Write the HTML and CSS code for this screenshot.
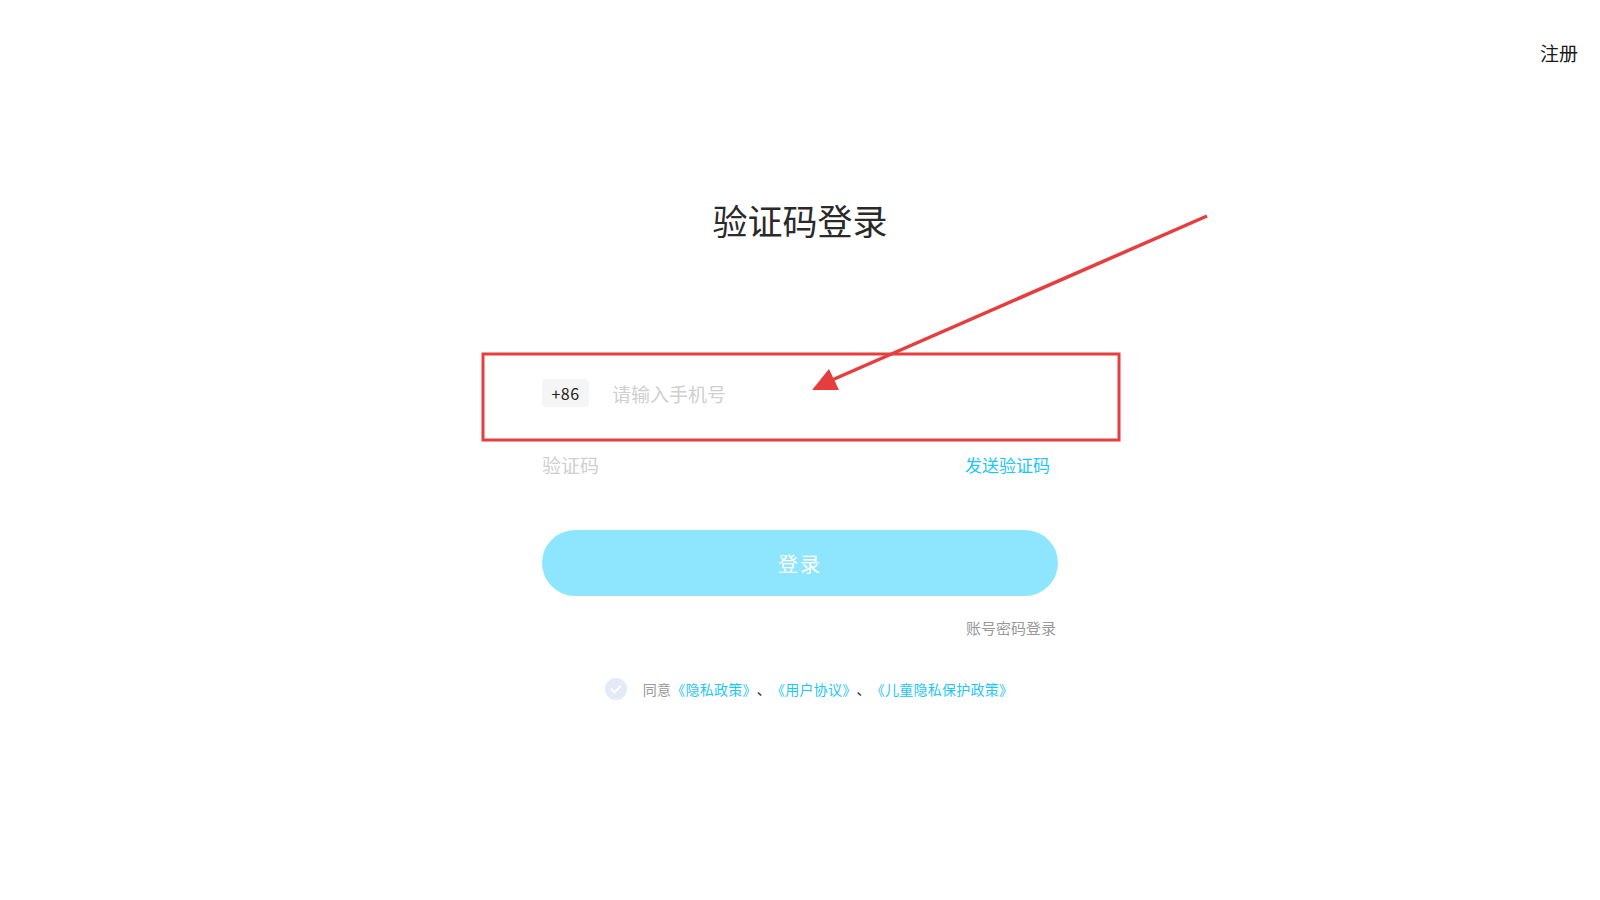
FILE: index.html
```html
<!DOCTYPE html>
<html lang="zh-CN">
  <head>
    <meta charset="UTF-8" />
    <meta name="viewport" content="width=device-width, initial-scale=1.0" />
    <title>验证码登录</title>
    <link rel="stylesheet" href="styles.css">
  </head>
  <body>
    <header class="topbar">
      <a class="register" href="#">注册</a>
    </header>

    <main class="login">
      <h1 class="title">验证码登录</h1>

      <div class="field phone">
        <span class="code">+86</span>
        <input class="input" type="text" placeholder="请输入手机号" />
      </div>

      <div class="field sms">
        <input class="input" type="text" placeholder="验证码" />
        <a class="send" href="#">发送验证码</a>
      </div>

      <button class="submit">登录</button>

      <div class="switch">
        <a href="#">账号密码登录</a>
      </div>

      <div class="agree">
        <span class="check">
          <svg width="22" height="22" viewBox="0 0 22 22">
            <circle cx="11" cy="11" r="11" fill="#e3e9f6" />
            <path d="M6.5 11.2 L9.6 14.2 L15.5 8.3" fill="none" stroke="#fff" stroke-width="2" stroke-linecap="round" stroke-linejoin="round" />
          </svg>
        </span>
        <span class="muted">同意</span><a href="#">《隐私政策》</a><span class="sep">、</span><a href="#">《用户协议》</a><span class="sep">、</span><a href="#">《儿童隐私保护政策》</a>
      </div>
    </main>

    <!-- annotation drawn over the page -->
    <svg class="markup" width="1600" height="900" viewBox="0 0 1600 900">
      <rect x="483" y="354" width="636" height="86" fill="none" stroke="#e63e3e" stroke-width="3" />
      <line x1="1207" y1="216" x2="832" y2="380" stroke="#e63e3e" stroke-width="3.5" />
      <polygon points="812,390 829,369 839,390" fill="#e63e3e" />
    </svg>
  </body>
</html>
```

FILE: styles.css
```css
* {
  box-sizing: border-box;
}

body {
  margin: 0;
  background-color: #fff;
  font-family: "Noto Sans CJK SC", "Noto Sans", sans-serif;
  color: #333;
}

a {
  text-decoration: none;
  color: #1ec6f2;
}

.topbar {
  display: flex;
  justify-content: flex-end;
  height: 66px;
  padding: 40px 22px 0;
}

.register {
  font-size: 19px;
  line-height: 26px;
  color: #1a1a1a;
}

.login {
  width: 516px;
  margin: 0 auto;
}

.title {
  margin: 130px 0 0;
  font-size: 35px;
  line-height: 48px;
  font-weight: 400;
  text-align: center;
  color: #2a2a2a;
}

.field {
  display: flex;
  align-items: center;
  height: 50px;
}

.phone {
  margin-top: 124px;
}

.sms {
  margin-top: 21px;
}

.code {
  width: 47px;
  height: 28px;
  margin-right: 23px;
  border-radius: 4px;
  background-color: #f5f5f5;
  font-size: 16px;
  line-height: 28px;
  text-align: center;
  color: #222;
  letter-spacing: 0.5px;
}

.input {
  flex: 1;
  border: none;
  outline: none;
  padding: 0;
  font-family: inherit;
  font-size: 19px;
  color: #333;
  background: transparent;
}

.input::placeholder {
  color: #cfcfcf;
}

.send {
  font-size: 17px;
  margin-right: 8px;
}

.submit {
  display: block;
  width: 100%;
  height: 66px;
  margin-top: 41px;
  border: none;
  border-radius: 33px;
  background-color: #8ee5fe;
  color: #fff;
  font-family: inherit;
  font-size: 20px;
  letter-spacing: 2px;
}

.switch {
  margin-top: 21px;
  padding-right: 2px;
  text-align: right;
  font-size: 15px;
  line-height: 22px;
}

.switch a {
  color: #999;
}

.agree {
  display: flex;
  align-items: center;
  justify-content: center;
  margin-top: 39px;
  padding-left: 18px;
  font-size: 14px;
  line-height: 22px;
  letter-spacing: 0.25px;
}

.check {
  display: flex;
  margin-right: 16px;
}

.muted {
  color: #999;
}

.sep {
  color: #333;
}

.markup {
  position: absolute;
  top: 0;
  left: 0;
  pointer-events: none;
}
```
